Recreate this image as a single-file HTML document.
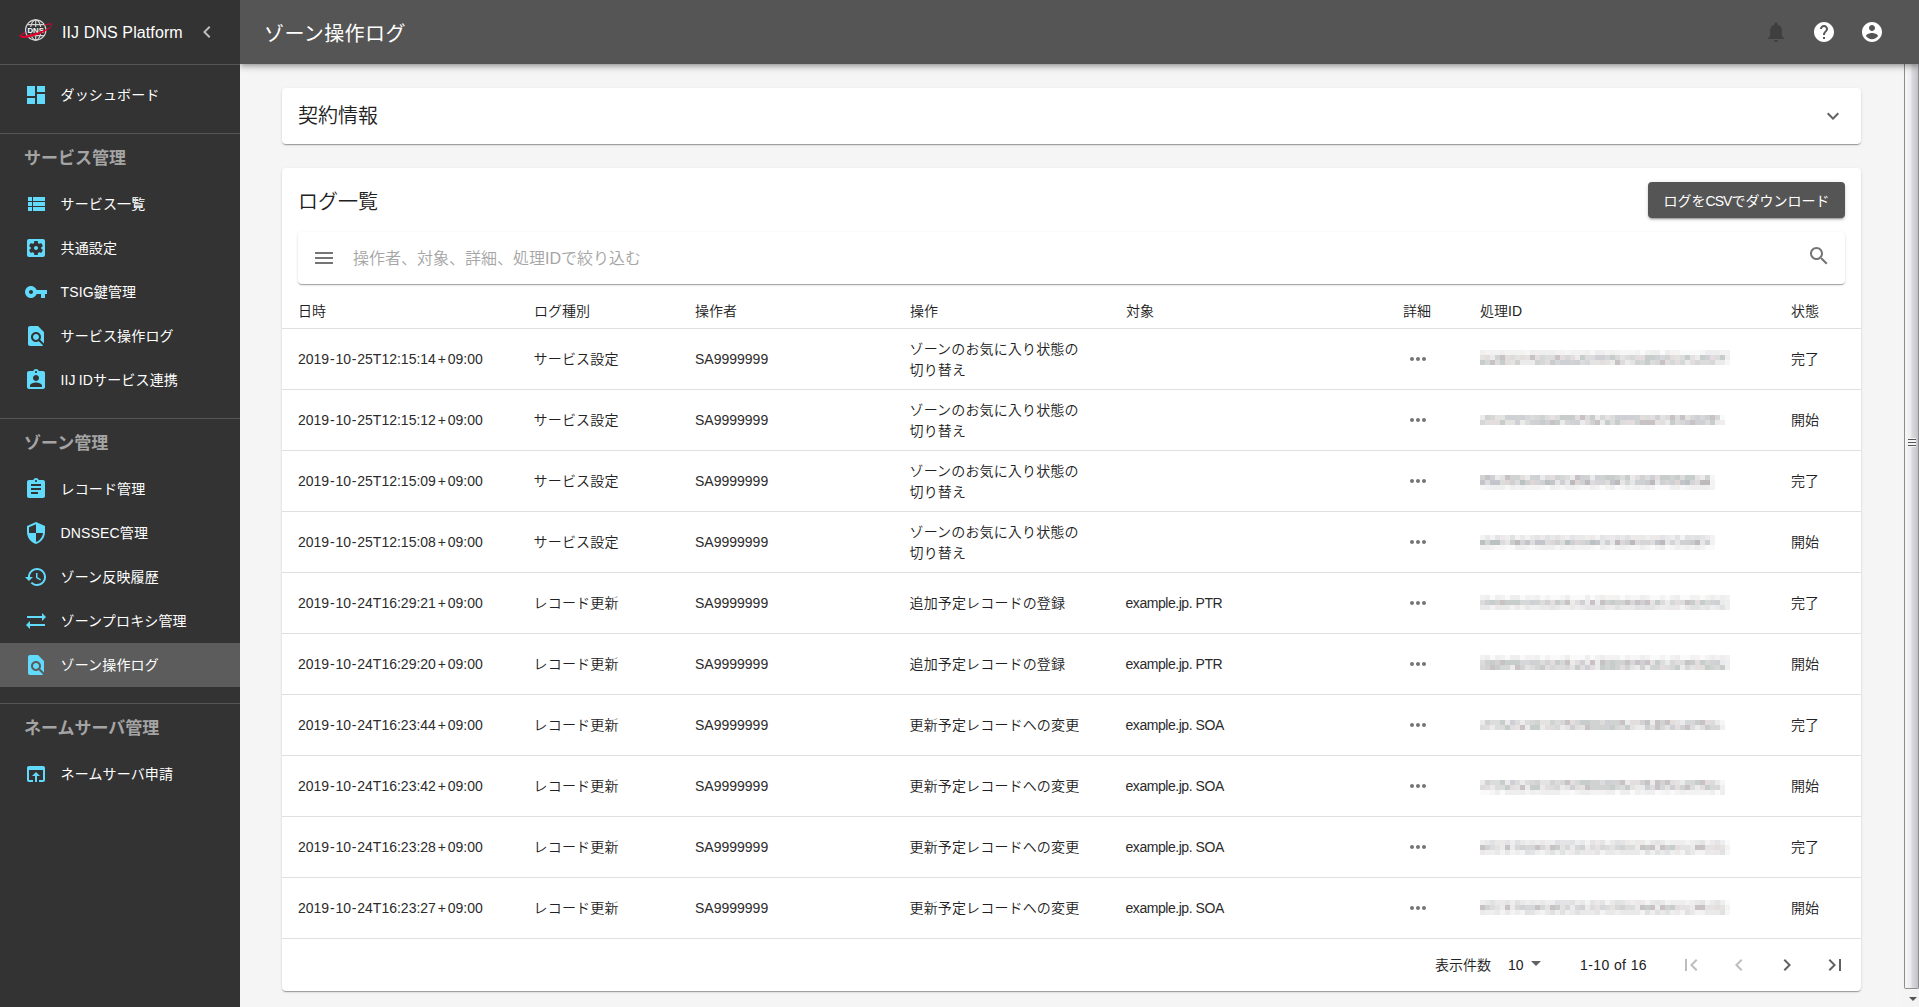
<!DOCTYPE html>
<html lang="ja">
<head>
<meta charset="utf-8">
<title>ゾーン操作ログ</title>
<style>
*{box-sizing:border-box;margin:0;padding:0}
html,body{width:1919px;height:1007px;overflow:hidden;background:#f5f5f5}
body{position:relative;font-family:"Liberation Sans","Noto Sans CJK JP",sans-serif;font-size:14px;color:#212121}
svg{display:block}
/* sidebar */
#side{position:absolute;left:0;top:0;width:240px;height:1007px;background:#333;color:#fff;z-index:3}
#brand{position:absolute;left:0;top:0;width:240px;height:64px}
#brand .logo{position:absolute;left:14px;top:12px}
#brand .name{position:absolute;left:62px;top:23px;font-size:16px;line-height:20px;white-space:nowrap;letter-spacing:.1px}
#brand .chev{position:absolute;left:195px;top:20px}
.sdiv{position:absolute;left:0;width:240px;height:1px;background:#555}
.shead{position:absolute;left:24px;font-size:17px;line-height:24px;font-weight:700;color:#a4a4a4;white-space:nowrap}
.item{position:absolute;left:0;width:240px;height:44px}
.item.active{background:#5c5c5c}
.item svg{position:absolute;left:24px;top:10px;fill:#61dafb}
.item span{position:absolute;left:60.5px;top:11px;font-size:14px;line-height:22px;white-space:nowrap;letter-spacing:.15px}
/* header */
#top{position:absolute;left:240px;top:0;width:1679px;height:64px;background:#555;color:#fff;z-index:2;box-shadow:0 2px 4px -1px rgba(0,0,0,.2),0 4px 5px 0 rgba(0,0,0,.14),0 1px 10px 0 rgba(0,0,0,.12)}
#top .title{position:absolute;left:24px;top:19px;font-size:20px;line-height:30px;white-space:nowrap;letter-spacing:.4px}
#top svg{position:absolute;top:20px}
/* scrollbar */
#sb{position:absolute;left:1902px;top:64px;width:17px;height:943px;background:#f4f4f4}
#sb .thumb{position:absolute;left:2px;top:0;width:15px;height:925px;border:1px solid #8d8d8d;border-top:0;border-radius:0 0 2px 2px;background:linear-gradient(90deg,#f7f7f7 0%,#ececee 42%,#d9d9de 56%,#c2c2c9 100%)}
#sb .grip{position:absolute;left:6px;top:374px;width:8px;height:9px;background:linear-gradient(180deg,#f4f4f4 0,#f4f4f4 1px,#555 1px,#555 2px,#f4f4f4 2px,#f4f4f4 4px,#555 4px,#555 5px,#f4f4f4 5px,#f4f4f4 7px,#555 7px,#555 8px,#f4f4f4 8px)}
#sb .arrow{position:absolute;left:6.500px;top:933px;width:0;height:0;border-left:4px solid transparent;border-right:4px solid transparent;border-top:4px solid #555}
/* cards */
.card{position:absolute;left:282px;width:1579px;background:#fff;border-radius:4px;box-shadow:0 2px 1px -1px rgba(0,0,0,.2),0 1px 1px 0 rgba(0,0,0,.14),0 1px 3px 0 rgba(0,0,0,.12)}
.ctitle{position:absolute;left:16px;font-weight:350;font-size:20px;line-height:30px;white-space:nowrap;color:#212121}
#btn{position:absolute;left:1366px;top:14px;width:197px;height:36px;border-radius:4px;background:#555;color:#fff;font-size:14px;line-height:38px;text-align:center;white-space:nowrap;box-shadow:0 3px 1px -2px rgba(0,0,0,.2),0 2px 2px 0 rgba(0,0,0,.14),0 1px 5px 0 rgba(0,0,0,.12)}
#search{position:absolute;left:16px;top:64px;width:1547px;height:52px;border-radius:4px;background:#fff;box-shadow:0 2px 1px -1px rgba(0,0,0,.2),0 1px 1px 0 rgba(0,0,0,.14),0 1px 3px 0 rgba(0,0,0,.12)}
#search .ph{position:absolute;left:55px;top:15px;font-weight:350;font-size:16px;line-height:24px;color:#a5a5a5;white-space:nowrap}
#search svg{position:absolute;top:14px;fill:#757575}
/* table */
.th{position:absolute;top:132px;font-weight:350;font-size:14px;line-height:22px;white-space:nowrap;color:#212121}
.row{position:absolute;left:0;width:1579px;height:61px;border-top:1px solid #e0e0e0}
.row div{position:absolute;font-weight:350;font-size:14px;line-height:21px;white-space:nowrap;color:#212121}
.row .c1{left:16px;top:20px;letter-spacing:0;color:#2b2b2b}
.c1 i{font-style:normal;padding:0 .8px}
.c1 b{font-weight:400;padding:0 1.8px}
.c2{left:251.5px;top:20px;letter-spacing:.2px}
.row .c3{left:413px;top:20px;color:#2b2b2b}
.c4{left:627.5px;top:20px;letter-spacing:.15px}
.c4.two{top:10px}
.row .c5{left:843.5px;top:20px;letter-spacing:-.45px;color:#2b2b2b}
.c6{left:1124px;top:18px}
.c6 svg{fill:#757575}
.c7{left:1198px}
.c8{left:1509px;top:20px}
#foot{position:absolute;left:0;top:770px;width:1579px;height:52px;border-top:1px solid #e0e0e0;font-weight:350;font-size:14px;color:#212121}
#foot span{position:absolute;top:15px;line-height:22px;white-space:nowrap}
#foot svg{position:absolute;top:14px}
</style>
</head>
<body>

<div id="side">
  <div id="brand">
    <svg class="logo" width="48" height="38" viewBox="14 12 48 38" style="opacity:.999">
      <g fill="none" stroke="#d4d4d4" stroke-width="1.15">
        <circle cx="35.700" cy="30" r="10.200"/>
        <ellipse cx="35.700" cy="30" rx="5.200" ry="10.200"/>
        <path d="M35.700 19.800v20.400M27.300 24.600h16.800M27.300 35.600h16.800"/>
      </g>
      <rect x="28.300" y="27" width="14.800" height="6.600" fill="#333"/>
      <text x="35.700" y="33" text-anchor="middle" font-family="Liberation Sans,sans-serif" font-weight="700" font-size="7.800" fill="#fff">DNS</text>
      <g transform="translate(36 30.600) rotate(-20.700)" fill="#e3002d">
        <path d="M-17.400 -.2C-17.400 2.800 -8 4.500 0 4.500S17.400 2.600 17.400 -.2C16 2.200 8 3 0 2.300C-7 1.700 -13 .8 -17.400 -.2z"/>
        <path d="M17.400 -.2C17.600 -1.600 13.500 -2.400 9.600 -2.800L9.700 -1.900C13 -1.600 15.500 -1.100 16.300 -.2z"/>
        <path d="M-17.400 -.2C-17.600 -1.300 -14 -2 -10.800 -2.500L-10.700 -1.500C-13 -1.200 -15.500 -.8 -16.200 .2z"/>
      </g>
    </svg>
    <div class="name">IIJ DNS Platform</div>
    <svg class="chev" width="24" height="24" viewBox="0 0 24 24" fill="#bdbdbd"><path d="M15.410 7.410L14 6l-6 6 6 6 1.410-1.410L10.830 12z"/></svg>
  </div>
  <div class="sdiv" style="top:64px"></div>

  <div class="item" style="top:73px"><svg width="24" height="24" viewBox="0 0 24 24"><path d="M3 13h8V3H3v10zm0 8h8v-6H3v6zm10 0h8V11h-8v10zm0-18v6h8V3h-8z"/></svg><span>ダッシュボード</span></div>
  <div class="sdiv" style="top:133px"></div>

  <div class="shead" style="top:147px">サービス管理</div>
  <div class="item" style="top:182px"><svg width="24" height="24" viewBox="0 0 24 24"><path d="M4 14h4v-4H4v4zm0 5h4v-4H4v4zM4 9h4V5H4v4zm5 5h12v-4H9v4zm0 5h12v-4H9v4zM9 5v4h12V5H9z"/></svg><span>サービス一覧</span></div>
  <div class="item" style="top:226px"><svg width="24" height="24" viewBox="0 0 24 24"><path d="M12 10c-1.100 0-2 .9-2 2s.9 2 2 2 2-.9 2-2-.9-2-2-2zm7-7H5c-1.110 0-2 .9-2 2v14c0 1.100.89 2 2 2h14c1.110 0 2-.9 2-2V5c0-1.100-.89-2-2-2zm-1.750 9c0 .23-.02.46-.05.68l1.480 1.160c.13.11.17.3.08.45l-1.400 2.420c-.09.15-.27.21-.43.15l-1.740-.7c-.36.28-.76.51-1.180.69l-.26 1.850c-.03.17-.18.3-.35.3h-2.800c-.17 0-.32-.13-.35-.29l-.26-1.850c-.43-.18-.82-.41-1.180-.69l-1.740.7c-.16.06-.34 0-.43-.15l-1.400-2.420c-.09-.15-.05-.34.08-.45l1.480-1.160c-.03-.23-.05-.46-.05-.69 0-.23.02-.46.05-.68l-1.480-1.160c-.13-.11-.17-.3-.08-.45l1.400-2.420c.09-.15.27-.21.43-.15l1.740.7c.36-.28.76-.51 1.180-.69l.26-1.850c.03-.17.18-.3.35-.3h2.800c.17 0 .32.13.35.29l.26 1.850c.43.18.82.41 1.180.69l1.740-.7c.16-.06.34 0 .43.15l1.400 2.420c.09.15.05.34-.08.45l-1.480 1.160c.03.23.05.46.05.69z"/></svg><span>共通設定</span></div>
  <div class="item" style="top:270px"><svg width="24" height="24" viewBox="0 0 24 24"><path d="M12.650 10C11.830 7.670 9.610 6 7 6c-3.310 0-6 2.690-6 6s2.690 6 6 6c2.610 0 4.830-1.670 5.650-4H17v4h4v-4h2v-4H12.650zM7 14c-1.100 0-2-.9-2-2s.9-2 2-2 2 .9 2 2-.9 2-2 2z"/></svg><span>TSIG鍵管理</span></div>
  <div class="item" style="top:314px"><svg width="24" height="24" viewBox="0 0 24 24"><path d="M20 19.590V8l-6-6H6c-1.100 0-1.990.9-1.990 2L4 20c0 1.100.89 2 1.990 2H18c.45 0 .85-.15 1.190-.4l-4.430-4.430c-.8.52-1.740.83-2.760.83-2.760 0-5-2.240-5-5s2.240-5 5-5 5 2.240 5 5c0 1.020-.31 1.960-.83 2.750L20 19.590zM9 13c0 1.660 1.340 3 3 3s3-1.340 3-3-1.340-3-3-3-3 1.340-3 3z"/></svg><span>サービス操作ログ</span></div>
  <div class="item" style="top:358px"><svg width="24" height="24" viewBox="0 0 24 24"><path d="M19 3h-4.180C14.400 1.840 13.300 1 12 1c-1.300 0-2.400.84-2.820 2H5c-1.100 0-2 .9-2 2v14c0 1.100.9 2 2 2h14c1.100 0 2-.9 2-2V5c0-1.100-.9-2-2-2zm-7 0c.55 0 1 .45 1 1s-.45 1-1 1-1-.45-1-1 .45-1 1-1zm0 4c1.660 0 3 1.340 3 3s-1.340 3-3 3-3-1.340-3-3 1.340-3 3-3zm6 12H6v-1.400c0-2 4-3.100 6-3.100s6 1.100 6 3.100V19z"/></svg><span style="word-spacing:-1px">IIJ IDサービス連携</span></div>
  <div class="sdiv" style="top:418px"></div>

  <div class="shead" style="top:432px">ゾーン管理</div>
  <div class="item" style="top:467px"><svg width="24" height="24" viewBox="0 0 24 24"><path d="M19 3h-4.180C14.400 1.840 13.300 1 12 1c-1.300 0-2.400.84-2.820 2H5c-1.100 0-2 .9-2 2v14c0 1.100.9 2 2 2h14c1.100 0 2-.9 2-2V5c0-1.100-.9-2-2-2zm-7 0c.55 0 1 .45 1 1s-.45 1-1 1-1-.45-1-1 .45-1 1-1zm2 14H7v-2h7v2zm3-4H7v-2h10v2zm0-4H7V7h10v2z"/></svg><span>レコード管理</span></div>
  <div class="item" style="top:511px"><svg width="24" height="24" viewBox="0 0 24 24"><path d="M12 1L3 5v6c0 5.550 3.840 10.740 9 12 5.160-1.260 9-6.450 9-12V5l-9-4zm0 10.990h7c-.53 4.120-3.280 7.790-7 8.940V12H5V6.300l7-3.110v8.800z"/></svg><span>DNSSEC管理</span></div>
  <div class="item" style="top:555px"><svg width="24" height="24" viewBox="0 0 24 24"><path d="M13 3c-4.970 0-9 4.030-9 9H1l3.890 3.890.07.14L9 12H6c0-3.870 3.130-7 7-7s7 3.130 7 7-3.130 7-7 7c-1.930 0-3.680-.79-4.940-2.060l-1.420 1.420C8.270 19.990 10.510 21 13 21c4.970 0 9-4.030 9-9s-4.030-9-9-9zm-1 5v5l4.280 2.540.72-1.210-3.500-2.080V8H12z"/></svg><span>ゾーン反映履歴</span></div>
  <div class="item" style="top:599px"><svg width="24" height="24" viewBox="0 0 24 24"><path d="M22 8l-4-4v3H3v2h15v3l4-4zM2 16l4 4v-3h15v-2H6v-3l-4 4z"/></svg><span>ゾーンプロキシ管理</span></div>
  <div class="item active" style="top:643px"><svg width="24" height="24" viewBox="0 0 24 24"><path d="M20 19.590V8l-6-6H6c-1.100 0-1.990.9-1.990 2L4 20c0 1.100.89 2 1.990 2H18c.45 0 .85-.15 1.190-.4l-4.430-4.430c-.8.52-1.740.83-2.760.83-2.760 0-5-2.240-5-5s2.240-5 5-5 5 2.240 5 5c0 1.020-.31 1.960-.83 2.750L20 19.590zM9 13c0 1.660 1.340 3 3 3s3-1.340 3-3-1.340-3-3-3-3 1.340-3 3z"/></svg><span>ゾーン操作ログ</span></div>
  <div class="sdiv" style="top:703px"></div>

  <div class="shead" style="top:717px">ネームサーバ管理</div>
  <div class="item" style="top:752px"><svg width="24" height="24" viewBox="0 0 24 24"><path d="M19 4H5c-1.110 0-2 .9-2 2v12c0 1.100.89 2 2 2h4v-2H5V8h14v10h-4v2h4c1.100 0 2-.9 2-2V6c0-1.100-.89-2-2-2zm-7 6l-4 4h3v6h2v-6h3l-4-4z"/></svg><span>ネームサーバ申請</span></div>
</div>

<div id="top">
  <div class="title">ゾーン操作ログ</div>
  <svg style="left:1524px" width="24" height="24" viewBox="0 0 24 24" fill="#3f3f3f"><path d="M12 22c1.100 0 2-.9 2-2h-4c0 1.100.89 2 2 2zm6-6v-5c0-3.070-1.640-5.640-4.500-6.320V4c0-.83-.67-1.500-1.500-1.500s-1.500.67-1.500 1.500v.68C7.630 5.360 6 7.920 6 11v5l-2 2v1h16v-1l-2-2z"/></svg>
  <svg style="left:1572px" width="24" height="24" viewBox="0 0 24 24" fill="#fff"><path d="M12 2C6.480 2 2 6.480 2 12s4.480 10 10 10 10-4.480 10-10S17.520 2 12 2zm1 17h-2v-2h2v2zm2.070-7.750l-.9.92C13.450 12.900 13 13.500 13 15h-2v-.5c0-1.100.45-2.100 1.170-2.830l1.240-1.260c.37-.36.59-.86.590-1.410 0-1.100-.9-2-2-2s-2 .9-2 2H8c0-2.210 1.790-4 4-4s4 1.790 4 4c0 .88-.36 1.680-.93 2.250z"/></svg>
  <svg style="left:1620px" width="24" height="24" viewBox="0 0 24 24" fill="#fff"><path d="M12 2C6.480 2 2 6.480 2 12s4.480 10 10 10 10-4.480 10-10S17.520 2 12 2zm0 3c1.660 0 3 1.340 3 3s-1.340 3-3 3-3-1.340-3-3 1.340-3 3-3zm0 14.200c-2.500 0-4.710-1.280-6-3.220.03-1.990 4-3.080 6-3.080 1.990 0 5.970 1.090 6 3.080-1.290 1.940-3.500 3.220-6 3.220z"/></svg>
</div>

<div id="sb"><div class="thumb"></div><div class="grip"></div><div class="arrow"></div></div>

<div class="card" style="top:88px;height:56px">
  <div class="ctitle" style="top:13px">契約情報</div>
  <svg style="position:absolute;left:1539px;top:16px" width="24" height="24" viewBox="0 0 24 24" fill="#616161"><path d="M16.590 8.590L12 13.170 7.410 8.590 6 10l6 6 6-6z"/></svg>
</div>

<div class="card" id="log" style="top:168px;height:823px">
  <div class="ctitle" style="top:19px">ログ一覧</div>
  <div id="btn">ログを<span style="letter-spacing:-1px">CSV</span>でダウンロード</div>
  <div id="search">
    <svg style="left:14px" width="24" height="24" viewBox="0 0 24 24"><path d="M3 18h18v-2H3v2zm0-5h18v-2H3v2zm0-7v2h18V6H3z"/></svg>
    <div class="ph">操作者、対象、詳細、処理IDで絞り込む</div>
    <svg style="left:1509px;top:12px" width="24" height="24" viewBox="0 0 24 24"><path d="M15.500 14h-.79l-.28-.27C15.410 12.590 16 11.110 16 9.500 16 5.910 13.090 3 9.500 3S3 5.910 3 9.500 5.910 16 9.500 16c1.610 0 3.090-.59 4.230-1.570l.27.28v.79l5 4.990L20.490 19l-4.990-5zm-6 0C7.010 14 5 11.990 5 9.500S7.010 5 9.500 5 14 7.010 14 9.500 11.990 14 9.500 14z"/></svg>
  </div>

  <div class="th" style="left:16px">日時</div>
  <div class="th" style="left:252px">ログ種別</div>
  <div class="th" style="left:413px">操作者</div>
  <div class="th" style="left:628px">操作</div>
  <div class="th" style="left:844px">対象</div>
  <div class="th" style="left:1121px">詳細</div>
  <div class="th" style="left:1198px">処理ID</div>
  <div class="th" style="left:1509px">状態</div>

  <!--ROWS-START-->
  <div class="row" style="top:160px">
    <div class="c1">2019<i>-</i>10<i>-</i>25T12:15:14<b>+</b>09:00</div><div class="c2">サービス設定</div><div class="c3">SA9999999</div>
    <div class="c4 two">ゾーンのお気に入り状態の<br>切り替え</div><div class="c5"></div>
    <div class="c6"><svg width="24" height="24" viewBox="0 0 24 24"><path d="M6 10c-1.100 0-2 .9-2 2s.9 2 2 2 2-.9 2-2-.9-2-2-2zm12 0c-1.100 0-2 .9-2 2s.9 2 2 2 2-.9 2-2-.9-2-2-2zm-6 0c-1.100 0-2 .9-2 2s.9 2 2 2 2-.9 2-2-.9-2-2-2z"/></svg></div><div class="c7" style="top:21px"><svg width="250" height="15" viewBox="0 0 250 15" shape-rendering="crispEdges"><path fill="#efefef" d="M0 0h5v5h-5zM20 0h5v5h-5zM55 0h5v5h-5zM60 0h5v5h-5zM65 0h5v5h-5zM105 0h5v5h-5zM120 0h5v5h-5zM130 0h5v5h-5zM170 0h5v5h-5zM245 5h5v5h-5z"/><path fill="#f4f3f1" d="M5 0h5v5h-5zM25 0h5v5h-5zM40 0h5v5h-5zM75 0h5v5h-5zM80 0h5v5h-5zM100 0h5v5h-5zM125 0h5v5h-5zM190 0h5v5h-5zM195 0h5v5h-5zM240 0h5v5h-5z"/><path fill="#f2f2f2" d="M10 0h5v5h-5zM15 0h5v5h-5zM30 0h5v5h-5zM35 0h5v5h-5zM90 0h5v5h-5zM95 0h5v5h-5zM135 0h5v5h-5zM155 0h5v5h-5zM165 0h5v5h-5zM245 0h5v5h-5z"/><path fill="#f6f6f6" d="M45 0h5v5h-5zM85 0h5v5h-5zM110 0h5v5h-5zM140 0h5v5h-5zM145 0h5v5h-5zM150 0h5v5h-5zM220 0h5v5h-5zM245 10h5v5h-5z"/><path fill="#eeeeef" d="M50 0h5v5h-5zM70 0h5v5h-5zM115 0h5v5h-5zM175 0h5v5h-5zM185 0h5v5h-5zM225 0h5v5h-5zM230 0h5v5h-5zM235 0h5v5h-5z"/><path fill="#fafafa" d="M160 0h5v5h-5zM180 0h5v5h-5zM200 0h5v5h-5zM205 0h5v5h-5zM210 0h5v5h-5zM215 0h5v5h-5z"/><path fill="#e4e3e2" d="M0 5h5v5h-5zM35 5h5v5h-5zM45 5h5v5h-5zM140 5h5v5h-5zM195 5h5v5h-5zM210 5h5v5h-5zM30 10h5v5h-5zM110 10h5v5h-5zM115 10h5v5h-5zM125 10h5v5h-5zM150 10h5v5h-5z"/><path fill="#e3dedd" d="M5 5h5v5h-5zM25 5h5v5h-5zM40 5h5v5h-5zM55 5h5v5h-5zM80 5h5v5h-5zM90 5h5v5h-5zM155 5h5v5h-5zM160 5h5v5h-5zM190 5h5v5h-5zM230 5h5v5h-5zM25 10h5v5h-5zM65 10h5v5h-5zM120 10h5v5h-5zM185 10h5v5h-5zM195 10h5v5h-5zM210 10h5v5h-5z"/><path fill="#ebebeb" d="M10 5h5v5h-5zM95 5h5v5h-5zM215 5h5v5h-5zM40 10h5v5h-5zM45 10h5v5h-5zM50 10h5v5h-5zM130 10h5v5h-5zM145 10h5v5h-5zM205 10h5v5h-5zM235 10h5v5h-5zM240 10h5v5h-5z"/><path fill="#d0d3d2" d="M15 5h5v5h-5zM185 5h5v5h-5zM35 10h5v5h-5zM55 10h5v5h-5zM90 10h5v5h-5zM155 10h5v5h-5z"/><path fill="#c9c2c4" d="M20 5h5v5h-5zM50 5h5v5h-5zM75 5h5v5h-5zM10 10h5v5h-5zM135 10h5v5h-5zM180 10h5v5h-5z"/><path fill="#dcdcdc" d="M30 5h5v5h-5zM65 5h5v5h-5zM70 5h5v5h-5zM105 5h5v5h-5zM110 5h5v5h-5zM145 5h5v5h-5zM200 5h5v5h-5zM235 5h5v5h-5zM15 10h5v5h-5zM100 10h5v5h-5zM140 10h5v5h-5zM170 10h5v5h-5zM220 10h5v5h-5zM225 10h5v5h-5z"/><path fill="#d6d7d9" d="M60 5h5v5h-5zM85 5h5v5h-5zM125 5h5v5h-5zM135 5h5v5h-5zM150 5h5v5h-5zM180 5h5v5h-5zM5 10h5v5h-5zM60 10h5v5h-5zM75 10h5v5h-5zM105 10h5v5h-5zM160 10h5v5h-5zM175 10h5v5h-5zM190 10h5v5h-5zM200 10h5v5h-5zM215 10h5v5h-5zM230 10h5v5h-5z"/><path fill="#c6cdcb" d="M100 5h5v5h-5zM130 5h5v5h-5zM165 5h5v5h-5zM170 5h5v5h-5zM205 5h5v5h-5zM220 5h5v5h-5zM240 5h5v5h-5zM0 10h5v5h-5zM20 10h5v5h-5zM70 10h5v5h-5zM165 10h5v5h-5z"/><path fill="#cfcfd6" d="M115 5h5v5h-5zM120 5h5v5h-5zM175 5h5v5h-5zM225 5h5v5h-5zM80 10h5v5h-5zM85 10h5v5h-5zM95 10h5v5h-5z"/></svg></div><div class="c8">完了</div>
  </div>
  <div class="row" style="top:221px">
    <div class="c1">2019<i>-</i>10<i>-</i>25T12:15:12<b>+</b>09:00</div><div class="c2">サービス設定</div><div class="c3">SA9999999</div>
    <div class="c4 two">ゾーンのお気に入り状態の<br>切り替え</div><div class="c5"></div>
    <div class="c6"><svg width="24" height="24" viewBox="0 0 24 24"><path d="M6 10c-1.100 0-2 .9-2 2s.9 2 2 2 2-.9 2-2-.9-2-2-2zm12 0c-1.100 0-2 .9-2 2s.9 2 2 2 2-.9 2-2-.9-2-2-2zm-6 0c-1.100 0-2 .9-2 2s.9 2 2 2 2-.9 2-2-.9-2-2-2z"/></svg></div><div class="c7" style="top:25px"><svg width="245" height="10" viewBox="0 0 245 10" shape-rendering="crispEdges"><path fill="#ebebeb" d="M0 0h5v5h-5zM115 0h5v5h-5zM40 5h5v5h-5zM80 5h5v5h-5zM100 5h5v5h-5zM120 5h5v5h-5zM185 5h5v5h-5zM235 5h5v5h-5z"/><path fill="#d0d3d2" d="M5 0h5v5h-5zM35 0h5v5h-5zM60 0h5v5h-5zM155 0h5v5h-5zM50 5h5v5h-5zM90 5h5v5h-5zM110 5h5v5h-5zM155 5h5v5h-5z"/><path fill="#d6d7d9" d="M10 0h5v5h-5zM45 0h5v5h-5zM55 0h5v5h-5zM120 0h5v5h-5zM210 0h5v5h-5zM220 0h5v5h-5zM235 0h5v5h-5zM0 5h5v5h-5zM85 5h5v5h-5zM200 5h5v5h-5z"/><path fill="#e4e3e2" d="M15 0h5v5h-5zM20 0h5v5h-5zM70 0h5v5h-5zM125 0h5v5h-5zM180 0h5v5h-5zM205 0h5v5h-5zM25 5h5v5h-5zM30 5h5v5h-5zM175 5h5v5h-5z"/><path fill="#cfcfd6" d="M25 0h5v5h-5zM30 0h5v5h-5zM40 0h5v5h-5zM135 0h5v5h-5zM140 0h5v5h-5zM145 0h5v5h-5zM150 0h5v5h-5zM175 0h5v5h-5zM215 0h5v5h-5zM225 0h5v5h-5zM35 5h5v5h-5zM55 5h5v5h-5zM65 5h5v5h-5zM95 5h5v5h-5zM205 5h5v5h-5zM215 5h5v5h-5zM220 5h5v5h-5z"/><path fill="#dcdcdc" d="M50 0h5v5h-5zM65 0h5v5h-5zM75 0h5v5h-5zM105 0h5v5h-5zM130 0h5v5h-5zM165 0h5v5h-5zM185 0h5v5h-5zM195 0h5v5h-5zM45 5h5v5h-5zM130 5h5v5h-5zM140 5h5v5h-5zM195 5h5v5h-5zM225 5h5v5h-5z"/><path fill="#c6cdcb" d="M80 0h5v5h-5zM85 0h5v5h-5zM90 0h5v5h-5zM110 0h5v5h-5zM20 5h5v5h-5zM60 5h5v5h-5zM75 5h5v5h-5zM125 5h5v5h-5zM135 5h5v5h-5zM190 5h5v5h-5zM230 5h5v5h-5z"/><path fill="#e3dedd" d="M95 0h5v5h-5zM160 0h5v5h-5zM170 0h5v5h-5zM5 5h5v5h-5zM10 5h5v5h-5zM15 5h5v5h-5zM105 5h5v5h-5zM145 5h5v5h-5zM150 5h5v5h-5zM180 5h5v5h-5z"/><path fill="#c9c2c4" d="M100 0h5v5h-5zM190 0h5v5h-5zM200 0h5v5h-5zM230 0h5v5h-5zM70 5h5v5h-5zM115 5h5v5h-5zM160 5h5v5h-5zM165 5h5v5h-5zM170 5h5v5h-5zM210 5h5v5h-5z"/><path fill="#fafafa" d="M240 0h5v5h-5z"/><path fill="#eeeeef" d="M240 5h5v5h-5z"/></svg></div><div class="c8">開始</div>
  </div>
  <div class="row" style="top:282px">
    <div class="c1">2019<i>-</i>10<i>-</i>25T12:15:09<b>+</b>09:00</div><div class="c2">サービス設定</div><div class="c3">SA9999999</div>
    <div class="c4 two">ゾーンのお気に入り状態の<br>切り替え</div><div class="c5"></div>
    <div class="c6"><svg width="24" height="24" viewBox="0 0 24 24"><path d="M6 10c-1.100 0-2 .9-2 2s.9 2 2 2 2-.9 2-2-.9-2-2-2zm12 0c-1.100 0-2 .9-2 2s.9 2 2 2 2-.9 2-2-.9-2-2-2zm-6 0c-1.100 0-2 .9-2 2s.9 2 2 2 2-.9 2-2-.9-2-2-2z"/></svg></div><div class="c7" style="top:24px"><svg width="235" height="15" viewBox="0 0 235 15" shape-rendering="crispEdges"><path fill="#d0d3d2" d="M0 0h5v5h-5zM30 0h5v5h-5zM35 0h5v5h-5zM50 0h5v5h-5zM75 0h5v5h-5zM105 0h5v5h-5zM120 0h5v5h-5zM135 0h5v5h-5zM160 0h5v5h-5zM190 0h5v5h-5zM225 0h5v5h-5z"/><path fill="#c9c2c4" d="M5 0h5v5h-5zM25 0h5v5h-5zM95 0h5v5h-5z"/><path fill="#cfcfd6" d="M10 0h5v5h-5zM55 0h5v5h-5zM100 0h5v5h-5zM115 0h5v5h-5zM170 0h5v5h-5z"/><path fill="#ebebeb" d="M15 0h5v5h-5zM45 0h5v5h-5zM60 0h5v5h-5zM90 0h5v5h-5zM110 0h5v5h-5zM150 0h5v5h-5zM220 0h5v5h-5z"/><path fill="#e4e3e2" d="M20 0h5v5h-5zM215 0h5v5h-5z"/><path fill="#e3dedd" d="M40 0h5v5h-5zM70 0h5v5h-5zM155 0h5v5h-5zM175 0h5v5h-5z"/><path fill="#dcdcdc" d="M65 0h5v5h-5zM85 0h5v5h-5zM140 0h5v5h-5zM165 0h5v5h-5zM200 0h5v5h-5zM5 5h5v5h-5zM20 5h5v5h-5zM35 5h5v5h-5zM110 5h5v5h-5zM125 5h5v5h-5zM215 5h5v5h-5z"/><path fill="#d6d7d9" d="M80 0h5v5h-5z"/><path fill="#c6cdcb" d="M125 0h5v5h-5zM130 0h5v5h-5zM145 0h5v5h-5zM180 0h5v5h-5zM185 0h5v5h-5zM195 0h5v5h-5zM205 0h5v5h-5zM210 0h5v5h-5z"/><path fill="#f6f6f6" d="M230 0h5v5h-5zM0 10h5v5h-5zM25 10h5v5h-5zM60 10h5v5h-5zM80 10h5v5h-5zM100 10h5v5h-5zM105 10h5v5h-5zM140 10h5v5h-5zM200 10h5v5h-5z"/><path fill="#c3c4cc" d="M0 5h5v5h-5zM10 5h5v5h-5zM15 5h5v5h-5zM70 5h5v5h-5zM130 5h5v5h-5zM200 5h5v5h-5z"/><path fill="#ddd6d4" d="M25 5h5v5h-5zM50 5h5v5h-5zM95 5h5v5h-5zM195 5h5v5h-5z"/><path fill="#cfd0d3" d="M30 5h5v5h-5zM45 5h5v5h-5zM60 5h5v5h-5zM80 5h5v5h-5zM100 5h5v5h-5zM155 5h5v5h-5zM160 5h5v5h-5zM180 5h5v5h-5zM190 5h5v5h-5z"/><path fill="#b9c2c0" d="M40 5h5v5h-5zM65 5h5v5h-5zM205 5h5v5h-5z"/><path fill="#d5d5d7" d="M55 5h5v5h-5zM115 5h5v5h-5zM120 5h5v5h-5zM145 5h5v5h-5zM185 5h5v5h-5zM210 5h5v5h-5z"/><path fill="#e6e6e6" d="M75 5h5v5h-5zM85 5h5v5h-5zM140 5h5v5h-5zM150 5h5v5h-5zM175 5h5v5h-5z"/><path fill="#bdb9bd" d="M90 5h5v5h-5zM105 5h5v5h-5zM135 5h5v5h-5zM170 5h5v5h-5zM220 5h5v5h-5zM225 5h5v5h-5z"/><path fill="#c9cccb" d="M165 5h5v5h-5z"/><path fill="#f4f3f1" d="M230 5h5v5h-5zM45 10h5v5h-5zM55 10h5v5h-5zM115 10h5v5h-5zM125 10h5v5h-5zM160 10h5v5h-5zM230 10h5v5h-5z"/><path fill="#f2f2f2" d="M5 10h5v5h-5zM35 10h5v5h-5zM50 10h5v5h-5zM75 10h5v5h-5zM95 10h5v5h-5zM150 10h5v5h-5zM170 10h5v5h-5zM205 10h5v5h-5z"/><path fill="#efefef" d="M10 10h5v5h-5zM20 10h5v5h-5zM30 10h5v5h-5zM40 10h5v5h-5zM70 10h5v5h-5zM85 10h5v5h-5zM145 10h5v5h-5zM155 10h5v5h-5zM190 10h5v5h-5zM195 10h5v5h-5zM210 10h5v5h-5zM215 10h5v5h-5zM225 10h5v5h-5z"/><path fill="#eeeeef" d="M15 10h5v5h-5zM90 10h5v5h-5zM110 10h5v5h-5zM130 10h5v5h-5zM165 10h5v5h-5zM220 10h5v5h-5z"/><path fill="#fafafa" d="M65 10h5v5h-5zM120 10h5v5h-5zM135 10h5v5h-5zM175 10h5v5h-5zM180 10h5v5h-5zM185 10h5v5h-5z"/></svg></div><div class="c8">完了</div>
  </div>
  <div class="row" style="top:343px">
    <div class="c1">2019<i>-</i>10<i>-</i>25T12:15:08<b>+</b>09:00</div><div class="c2">サービス設定</div><div class="c3">SA9999999</div>
    <div class="c4 two">ゾーンのお気に入り状態の<br>切り替え</div><div class="c5"></div>
    <div class="c6"><svg width="24" height="24" viewBox="0 0 24 24"><path d="M6 10c-1.100 0-2 .9-2 2s.9 2 2 2 2-.9 2-2-.9-2-2-2zm12 0c-1.100 0-2 .9-2 2s.9 2 2 2 2-.9 2-2-.9-2-2-2zm-6 0c-1.100 0-2 .9-2 2s.9 2 2 2 2-.9 2-2-.9-2-2-2z"/></svg></div><div class="c7" style="top:23px"><svg width="235" height="15" viewBox="0 0 235 15" shape-rendering="crispEdges"><path fill="#f3f3f3" d="M0 0h5v5h-5zM10 0h5v5h-5zM35 0h5v5h-5zM45 0h5v5h-5zM115 0h5v5h-5zM200 0h5v5h-5z"/><path fill="#e9e9ea" d="M5 0h5v5h-5zM40 0h5v5h-5zM50 0h5v5h-5zM70 0h5v5h-5zM95 0h5v5h-5zM100 0h5v5h-5zM125 0h5v5h-5zM140 0h5v5h-5zM160 0h5v5h-5zM185 0h5v5h-5z"/><path fill="#e4e4e6" d="M15 0h5v5h-5zM55 0h5v5h-5zM75 0h5v5h-5zM90 0h5v5h-5zM120 0h5v5h-5zM135 0h5v5h-5zM180 0h5v5h-5zM210 0h5v5h-5zM220 0h5v5h-5z"/><path fill="#ece9e8" d="M20 0h5v5h-5zM60 0h5v5h-5zM80 0h5v5h-5zM110 0h5v5h-5zM130 0h5v5h-5zM150 0h5v5h-5zM155 0h5v5h-5zM170 0h5v5h-5zM175 0h5v5h-5zM225 0h5v5h-5z"/><path fill="#eeeeee" d="M25 0h5v5h-5zM85 0h5v5h-5zM105 0h5v5h-5zM165 0h5v5h-5zM190 0h5v5h-5z"/><path fill="#e0e1e3" d="M30 0h5v5h-5zM65 0h5v5h-5zM145 0h5v5h-5zM195 0h5v5h-5zM205 0h5v5h-5zM215 0h5v5h-5z"/><path fill="#f2f2f2" d="M230 0h5v5h-5zM230 5h5v5h-5zM55 10h5v5h-5zM85 10h5v5h-5zM100 10h5v5h-5zM125 10h5v5h-5zM145 10h5v5h-5zM200 10h5v5h-5zM220 10h5v5h-5z"/><path fill="#b9c2c0" d="M0 5h5v5h-5zM10 5h5v5h-5zM15 5h5v5h-5zM85 5h5v5h-5zM110 5h5v5h-5z"/><path fill="#d5d5d7" d="M5 5h5v5h-5zM40 5h5v5h-5zM100 5h5v5h-5zM160 5h5v5h-5zM165 5h5v5h-5zM190 5h5v5h-5z"/><path fill="#dcdcdc" d="M20 5h5v5h-5zM50 5h5v5h-5zM65 5h5v5h-5zM80 5h5v5h-5zM155 5h5v5h-5zM170 5h5v5h-5z"/><path fill="#e6e6e6" d="M25 5h5v5h-5zM120 5h5v5h-5zM130 5h5v5h-5zM185 5h5v5h-5zM195 5h5v5h-5zM220 5h5v5h-5z"/><path fill="#c9cccb" d="M30 5h5v5h-5zM210 5h5v5h-5z"/><path fill="#bdb9bd" d="M35 5h5v5h-5zM135 5h5v5h-5zM150 5h5v5h-5zM180 5h5v5h-5zM215 5h5v5h-5z"/><path fill="#c3c4cc" d="M45 5h5v5h-5zM55 5h5v5h-5zM60 5h5v5h-5zM115 5h5v5h-5zM175 5h5v5h-5z"/><path fill="#ddd6d4" d="M70 5h5v5h-5zM95 5h5v5h-5zM140 5h5v5h-5z"/><path fill="#cfd0d3" d="M75 5h5v5h-5zM90 5h5v5h-5zM105 5h5v5h-5zM125 5h5v5h-5zM145 5h5v5h-5zM200 5h5v5h-5zM205 5h5v5h-5zM225 5h5v5h-5z"/><path fill="#efefef" d="M0 10h5v5h-5zM5 10h5v5h-5zM40 10h5v5h-5zM60 10h5v5h-5zM70 10h5v5h-5zM80 10h5v5h-5zM90 10h5v5h-5zM120 10h5v5h-5zM135 10h5v5h-5zM195 10h5v5h-5zM205 10h5v5h-5z"/><path fill="#f4f3f1" d="M10 10h5v5h-5zM45 10h5v5h-5zM95 10h5v5h-5zM105 10h5v5h-5zM165 10h5v5h-5zM175 10h5v5h-5zM210 10h5v5h-5z"/><path fill="#f6f6f6" d="M15 10h5v5h-5zM20 10h5v5h-5zM50 10h5v5h-5zM75 10h5v5h-5zM110 10h5v5h-5zM130 10h5v5h-5zM150 10h5v5h-5zM155 10h5v5h-5zM190 10h5v5h-5z"/><path fill="#fafafa" d="M25 10h5v5h-5zM30 10h5v5h-5zM115 10h5v5h-5zM170 10h5v5h-5zM185 10h5v5h-5zM225 10h5v5h-5zM230 10h5v5h-5z"/><path fill="#eeeeef" d="M35 10h5v5h-5zM65 10h5v5h-5zM140 10h5v5h-5zM160 10h5v5h-5zM180 10h5v5h-5zM215 10h5v5h-5z"/></svg></div><div class="c8">開始</div>
  </div>
  <div class="row" style="top:404px">
    <div class="c1">2019<i>-</i>10<i>-</i>24T16:29:21<b>+</b>09:00</div><div class="c2">レコード更新</div><div class="c3">SA9999999</div>
    <div class="c4">追加予定レコードの登録</div><div class="c5">example.jp. PTR</div>
    <div class="c6"><svg width="24" height="24" viewBox="0 0 24 24"><path d="M6 10c-1.100 0-2 .9-2 2s.9 2 2 2 2-.9 2-2-.9-2-2-2zm12 0c-1.100 0-2 .9-2 2s.9 2 2 2 2-.9 2-2-.9-2-2-2zm-6 0c-1.100 0-2 .9-2 2s.9 2 2 2 2-.9 2-2-.9-2-2-2z"/></svg></div><div class="c7" style="top:22px"><svg width="250" height="15" viewBox="0 0 250 15" shape-rendering="crispEdges"><path fill="#f2f2f2" d="M0 0h5v5h-5zM20 0h5v5h-5zM45 0h5v5h-5zM115 0h5v5h-5zM135 0h5v5h-5zM145 0h5v5h-5zM165 0h5v5h-5zM190 0h5v5h-5zM210 0h5v5h-5zM245 0h5v5h-5z"/><path fill="#eeeeef" d="M5 0h5v5h-5zM30 0h5v5h-5zM35 0h5v5h-5zM85 0h5v5h-5zM105 0h5v5h-5zM120 0h5v5h-5zM160 0h5v5h-5zM195 0h5v5h-5zM230 0h5v5h-5zM240 0h5v5h-5zM245 5h5v5h-5zM245 10h5v5h-5z"/><path fill="#fafafa" d="M10 0h5v5h-5zM25 0h5v5h-5zM40 0h5v5h-5zM60 0h5v5h-5zM70 0h5v5h-5zM75 0h5v5h-5zM90 0h5v5h-5zM95 0h5v5h-5zM100 0h5v5h-5zM110 0h5v5h-5zM140 0h5v5h-5zM170 0h5v5h-5zM175 0h5v5h-5zM185 0h5v5h-5zM200 0h5v5h-5zM205 0h5v5h-5zM220 0h5v5h-5z"/><path fill="#efefef" d="M15 0h5v5h-5zM55 0h5v5h-5z"/><path fill="#f4f3f1" d="M50 0h5v5h-5zM65 0h5v5h-5zM125 0h5v5h-5zM130 0h5v5h-5zM180 0h5v5h-5zM215 0h5v5h-5zM225 0h5v5h-5zM235 0h5v5h-5z"/><path fill="#f6f6f6" d="M80 0h5v5h-5zM150 0h5v5h-5zM155 0h5v5h-5z"/><path fill="#dcdcdc" d="M0 5h5v5h-5zM60 5h5v5h-5zM180 5h5v5h-5zM200 5h5v5h-5z"/><path fill="#cfcfd6" d="M5 5h5v5h-5zM50 5h5v5h-5zM100 5h5v5h-5zM160 5h5v5h-5zM235 5h5v5h-5z"/><path fill="#c6cdcb" d="M10 5h5v5h-5zM25 5h5v5h-5zM30 5h5v5h-5zM35 5h5v5h-5zM75 5h5v5h-5zM130 5h5v5h-5zM175 5h5v5h-5zM210 5h5v5h-5zM220 5h5v5h-5z"/><path fill="#d0d3d2" d="M15 5h5v5h-5zM55 5h5v5h-5zM65 5h5v5h-5zM125 5h5v5h-5zM135 5h5v5h-5zM140 5h5v5h-5zM230 5h5v5h-5z"/><path fill="#c9c2c4" d="M20 5h5v5h-5zM85 5h5v5h-5zM110 5h5v5h-5zM120 5h5v5h-5zM145 5h5v5h-5zM155 5h5v5h-5zM165 5h5v5h-5zM205 5h5v5h-5z"/><path fill="#d6d7d9" d="M40 5h5v5h-5zM45 5h5v5h-5zM80 5h5v5h-5zM150 5h5v5h-5zM190 5h5v5h-5zM225 5h5v5h-5z"/><path fill="#e3dedd" d="M70 5h5v5h-5zM95 5h5v5h-5zM195 5h5v5h-5zM215 5h5v5h-5z"/><path fill="#ebebeb" d="M90 5h5v5h-5zM105 5h5v5h-5zM115 5h5v5h-5zM185 5h5v5h-5zM240 5h5v5h-5z"/><path fill="#e4e3e2" d="M170 5h5v5h-5z"/><path fill="#e9e9ea" d="M0 10h5v5h-5zM5 10h5v5h-5zM20 10h5v5h-5zM25 10h5v5h-5zM45 10h5v5h-5zM60 10h5v5h-5zM75 10h5v5h-5zM90 10h5v5h-5zM140 10h5v5h-5zM150 10h5v5h-5zM175 10h5v5h-5zM190 10h5v5h-5zM205 10h5v5h-5zM220 10h5v5h-5zM235 10h5v5h-5z"/><path fill="#f3f3f3" d="M10 10h5v5h-5zM30 10h5v5h-5zM40 10h5v5h-5zM200 10h5v5h-5z"/><path fill="#ece9e8" d="M15 10h5v5h-5zM35 10h5v5h-5zM65 10h5v5h-5zM100 10h5v5h-5zM125 10h5v5h-5zM130 10h5v5h-5zM145 10h5v5h-5zM185 10h5v5h-5zM195 10h5v5h-5z"/><path fill="#eeeeee" d="M50 10h5v5h-5zM55 10h5v5h-5zM80 10h5v5h-5zM85 10h5v5h-5zM95 10h5v5h-5zM180 10h5v5h-5zM230 10h5v5h-5z"/><path fill="#e4e4e6" d="M70 10h5v5h-5zM105 10h5v5h-5zM110 10h5v5h-5zM115 10h5v5h-5zM160 10h5v5h-5zM225 10h5v5h-5z"/><path fill="#e0e1e3" d="M120 10h5v5h-5zM135 10h5v5h-5zM155 10h5v5h-5zM165 10h5v5h-5zM170 10h5v5h-5zM210 10h5v5h-5zM215 10h5v5h-5zM240 10h5v5h-5z"/></svg></div><div class="c8">完了</div>
  </div>
  <div class="row" style="top:465px">
    <div class="c1">2019<i>-</i>10<i>-</i>24T16:29:20<b>+</b>09:00</div><div class="c2">レコード更新</div><div class="c3">SA9999999</div>
    <div class="c4">追加予定レコードの登録</div><div class="c5">example.jp. PTR</div>
    <div class="c6"><svg width="24" height="24" viewBox="0 0 24 24"><path d="M6 10c-1.100 0-2 .9-2 2s.9 2 2 2 2-.9 2-2-.9-2-2-2zm12 0c-1.100 0-2 .9-2 2s.9 2 2 2 2-.9 2-2-.9-2-2-2zm-6 0c-1.100 0-2 .9-2 2s.9 2 2 2 2-.9 2-2-.9-2-2-2z"/></svg></div><div class="c7" style="top:21px"><svg width="250" height="15" viewBox="0 0 250 15" shape-rendering="crispEdges"><path fill="#f2f2f2" d="M0 0h5v5h-5zM20 0h5v5h-5zM45 0h5v5h-5zM115 0h5v5h-5zM135 0h5v5h-5zM145 0h5v5h-5zM165 0h5v5h-5zM190 0h5v5h-5zM210 0h5v5h-5zM245 0h5v5h-5z"/><path fill="#eeeeef" d="M5 0h5v5h-5zM30 0h5v5h-5zM35 0h5v5h-5zM85 0h5v5h-5zM105 0h5v5h-5zM120 0h5v5h-5zM160 0h5v5h-5zM195 0h5v5h-5zM230 0h5v5h-5zM240 0h5v5h-5zM245 5h5v5h-5zM245 10h5v5h-5z"/><path fill="#fafafa" d="M10 0h5v5h-5zM25 0h5v5h-5zM40 0h5v5h-5zM60 0h5v5h-5zM70 0h5v5h-5zM75 0h5v5h-5zM90 0h5v5h-5zM95 0h5v5h-5zM100 0h5v5h-5zM110 0h5v5h-5zM140 0h5v5h-5zM170 0h5v5h-5zM175 0h5v5h-5zM185 0h5v5h-5zM200 0h5v5h-5zM205 0h5v5h-5zM220 0h5v5h-5z"/><path fill="#efefef" d="M15 0h5v5h-5zM55 0h5v5h-5z"/><path fill="#f4f3f1" d="M50 0h5v5h-5zM65 0h5v5h-5zM125 0h5v5h-5zM130 0h5v5h-5zM180 0h5v5h-5zM215 0h5v5h-5zM225 0h5v5h-5zM235 0h5v5h-5z"/><path fill="#f6f6f6" d="M80 0h5v5h-5zM150 0h5v5h-5zM155 0h5v5h-5z"/><path fill="#dcdcdc" d="M0 5h5v5h-5zM60 5h5v5h-5zM180 5h5v5h-5zM200 5h5v5h-5zM50 10h5v5h-5zM75 10h5v5h-5zM80 10h5v5h-5zM185 10h5v5h-5z"/><path fill="#cfcfd6" d="M5 5h5v5h-5zM50 5h5v5h-5zM100 5h5v5h-5zM160 5h5v5h-5zM235 5h5v5h-5zM105 10h5v5h-5z"/><path fill="#c6cdcb" d="M10 5h5v5h-5zM25 5h5v5h-5zM30 5h5v5h-5zM35 5h5v5h-5zM75 5h5v5h-5zM130 5h5v5h-5zM175 5h5v5h-5zM210 5h5v5h-5zM220 5h5v5h-5zM15 10h5v5h-5zM60 10h5v5h-5zM95 10h5v5h-5zM120 10h5v5h-5zM130 10h5v5h-5zM195 10h5v5h-5zM225 10h5v5h-5zM240 10h5v5h-5z"/><path fill="#d0d3d2" d="M15 5h5v5h-5zM55 5h5v5h-5zM65 5h5v5h-5zM125 5h5v5h-5zM135 5h5v5h-5zM140 5h5v5h-5zM230 5h5v5h-5zM5 10h5v5h-5zM40 10h5v5h-5zM55 10h5v5h-5zM125 10h5v5h-5zM135 10h5v5h-5zM145 10h5v5h-5zM160 10h5v5h-5zM170 10h5v5h-5zM175 10h5v5h-5zM230 10h5v5h-5z"/><path fill="#c9c2c4" d="M20 5h5v5h-5zM85 5h5v5h-5zM110 5h5v5h-5zM120 5h5v5h-5zM145 5h5v5h-5zM155 5h5v5h-5zM165 5h5v5h-5zM205 5h5v5h-5zM10 10h5v5h-5zM35 10h5v5h-5z"/><path fill="#d6d7d9" d="M40 5h5v5h-5zM45 5h5v5h-5zM80 5h5v5h-5zM150 5h5v5h-5zM190 5h5v5h-5zM225 5h5v5h-5zM0 10h5v5h-5zM20 10h5v5h-5zM25 10h5v5h-5zM70 10h5v5h-5zM85 10h5v5h-5zM190 10h5v5h-5zM205 10h5v5h-5zM235 10h5v5h-5z"/><path fill="#e3dedd" d="M70 5h5v5h-5zM95 5h5v5h-5zM195 5h5v5h-5zM215 5h5v5h-5zM65 10h5v5h-5zM100 10h5v5h-5zM110 10h5v5h-5zM140 10h5v5h-5zM180 10h5v5h-5zM215 10h5v5h-5zM220 10h5v5h-5z"/><path fill="#ebebeb" d="M90 5h5v5h-5zM105 5h5v5h-5zM115 5h5v5h-5zM185 5h5v5h-5zM240 5h5v5h-5zM30 10h5v5h-5zM115 10h5v5h-5zM155 10h5v5h-5zM165 10h5v5h-5zM200 10h5v5h-5z"/><path fill="#e4e3e2" d="M170 5h5v5h-5zM45 10h5v5h-5zM90 10h5v5h-5zM150 10h5v5h-5zM210 10h5v5h-5z"/></svg></div><div class="c8">開始</div>
  </div>
  <div class="row" style="top:526px">
    <div class="c1">2019<i>-</i>10<i>-</i>24T16:23:44<b>+</b>09:00</div><div class="c2">レコード更新</div><div class="c3">SA9999999</div>
    <div class="c4">更新予定レコードへの変更</div><div class="c5">example.jp. SOA</div>
    <div class="c6"><svg width="24" height="24" viewBox="0 0 24 24"><path d="M6 10c-1.100 0-2 .9-2 2s.9 2 2 2 2-.9 2-2-.9-2-2-2zm12 0c-1.100 0-2 .9-2 2s.9 2 2 2 2-.9 2-2-.9-2-2-2zm-6 0c-1.100 0-2 .9-2 2s.9 2 2 2 2-.9 2-2-.9-2-2-2z"/></svg></div><div class="c7" style="top:25px"><svg width="245" height="10" viewBox="0 0 245 10" shape-rendering="crispEdges"><path fill="#ebebeb" d="M0 0h5v5h-5zM25 0h5v5h-5zM40 0h5v5h-5zM145 0h5v5h-5zM170 0h5v5h-5zM200 0h5v5h-5zM235 0h5v5h-5zM10 5h5v5h-5zM45 5h5v5h-5zM60 5h5v5h-5zM80 5h5v5h-5zM155 5h5v5h-5zM160 5h5v5h-5zM215 5h5v5h-5z"/><path fill="#d0d3d2" d="M5 0h5v5h-5zM55 0h5v5h-5zM70 0h5v5h-5zM110 0h5v5h-5zM115 0h5v5h-5zM130 0h5v5h-5zM135 0h5v5h-5zM160 0h5v5h-5zM180 0h5v5h-5zM110 5h5v5h-5zM115 5h5v5h-5zM120 5h5v5h-5zM125 5h5v5h-5zM200 5h5v5h-5z"/><path fill="#dcdcdc" d="M10 0h5v5h-5zM15 0h5v5h-5zM35 0h5v5h-5zM45 0h5v5h-5zM75 0h5v5h-5zM120 0h5v5h-5zM230 0h5v5h-5zM0 5h5v5h-5zM15 5h5v5h-5zM20 5h5v5h-5zM70 5h5v5h-5zM140 5h5v5h-5zM170 5h5v5h-5zM210 5h5v5h-5z"/><path fill="#c6cdcb" d="M20 0h5v5h-5zM100 0h5v5h-5zM105 0h5v5h-5zM215 0h5v5h-5zM25 5h5v5h-5zM50 5h5v5h-5zM55 5h5v5h-5zM130 5h5v5h-5zM145 5h5v5h-5zM225 5h5v5h-5z"/><path fill="#cfcfd6" d="M30 0h5v5h-5zM125 0h5v5h-5zM90 5h5v5h-5zM165 5h5v5h-5zM190 5h5v5h-5z"/><path fill="#d6d7d9" d="M50 0h5v5h-5zM80 0h5v5h-5zM95 0h5v5h-5zM205 0h5v5h-5zM210 0h5v5h-5zM75 5h5v5h-5zM135 5h5v5h-5zM180 5h5v5h-5zM230 5h5v5h-5zM235 5h5v5h-5z"/><path fill="#e4e3e2" d="M60 0h5v5h-5zM65 0h5v5h-5zM195 0h5v5h-5zM35 5h5v5h-5zM85 5h5v5h-5zM100 5h5v5h-5zM150 5h5v5h-5zM185 5h5v5h-5z"/><path fill="#c9c2c4" d="M85 0h5v5h-5zM140 0h5v5h-5zM165 0h5v5h-5zM175 0h5v5h-5zM185 0h5v5h-5zM220 0h5v5h-5zM40 5h5v5h-5zM105 5h5v5h-5zM175 5h5v5h-5zM205 5h5v5h-5z"/><path fill="#e3dedd" d="M90 0h5v5h-5zM150 0h5v5h-5zM155 0h5v5h-5zM190 0h5v5h-5zM225 0h5v5h-5zM5 5h5v5h-5zM30 5h5v5h-5zM65 5h5v5h-5zM95 5h5v5h-5zM195 5h5v5h-5zM220 5h5v5h-5z"/><path fill="#f6f6f6" d="M240 0h5v5h-5z"/><path fill="#efefef" d="M240 5h5v5h-5z"/></svg></div><div class="c8">完了</div>
  </div>
  <div class="row" style="top:587px">
    <div class="c1">2019<i>-</i>10<i>-</i>24T16:23:42<b>+</b>09:00</div><div class="c2">レコード更新</div><div class="c3">SA9999999</div>
    <div class="c4">更新予定レコードへの変更</div><div class="c5">example.jp. SOA</div>
    <div class="c6"><svg width="24" height="24" viewBox="0 0 24 24"><path d="M6 10c-1.100 0-2 .9-2 2s.9 2 2 2 2-.9 2-2-.9-2-2-2zm12 0c-1.100 0-2 .9-2 2s.9 2 2 2 2-.9 2-2-.9-2-2-2zm-6 0c-1.100 0-2 .9-2 2s.9 2 2 2 2-.9 2-2-.9-2-2-2z"/></svg></div><div class="c7" style="top:24px"><svg width="245" height="15" viewBox="0 0 245 15" shape-rendering="crispEdges"><path fill="#ebebeb" d="M0 0h5v5h-5zM25 0h5v5h-5zM40 0h5v5h-5zM145 0h5v5h-5zM170 0h5v5h-5zM200 0h5v5h-5zM235 0h5v5h-5zM10 5h5v5h-5zM45 5h5v5h-5zM60 5h5v5h-5zM80 5h5v5h-5zM155 5h5v5h-5zM160 5h5v5h-5zM215 5h5v5h-5z"/><path fill="#d0d3d2" d="M5 0h5v5h-5zM55 0h5v5h-5zM70 0h5v5h-5zM110 0h5v5h-5zM115 0h5v5h-5zM130 0h5v5h-5zM135 0h5v5h-5zM160 0h5v5h-5zM180 0h5v5h-5zM110 5h5v5h-5zM115 5h5v5h-5zM120 5h5v5h-5zM125 5h5v5h-5zM200 5h5v5h-5z"/><path fill="#dcdcdc" d="M10 0h5v5h-5zM15 0h5v5h-5zM35 0h5v5h-5zM45 0h5v5h-5zM75 0h5v5h-5zM120 0h5v5h-5zM230 0h5v5h-5zM0 5h5v5h-5zM15 5h5v5h-5zM20 5h5v5h-5zM70 5h5v5h-5zM140 5h5v5h-5zM170 5h5v5h-5zM210 5h5v5h-5z"/><path fill="#c6cdcb" d="M20 0h5v5h-5zM100 0h5v5h-5zM105 0h5v5h-5zM215 0h5v5h-5zM25 5h5v5h-5zM50 5h5v5h-5zM55 5h5v5h-5zM130 5h5v5h-5zM145 5h5v5h-5zM225 5h5v5h-5z"/><path fill="#cfcfd6" d="M30 0h5v5h-5zM125 0h5v5h-5zM90 5h5v5h-5zM165 5h5v5h-5zM190 5h5v5h-5z"/><path fill="#d6d7d9" d="M50 0h5v5h-5zM80 0h5v5h-5zM95 0h5v5h-5zM205 0h5v5h-5zM210 0h5v5h-5zM75 5h5v5h-5zM135 5h5v5h-5zM180 5h5v5h-5zM230 5h5v5h-5zM235 5h5v5h-5z"/><path fill="#e4e3e2" d="M60 0h5v5h-5zM65 0h5v5h-5zM195 0h5v5h-5zM35 5h5v5h-5zM85 5h5v5h-5zM100 5h5v5h-5zM150 5h5v5h-5zM185 5h5v5h-5z"/><path fill="#c9c2c4" d="M85 0h5v5h-5zM140 0h5v5h-5zM165 0h5v5h-5zM175 0h5v5h-5zM185 0h5v5h-5zM220 0h5v5h-5zM40 5h5v5h-5zM105 5h5v5h-5zM175 5h5v5h-5zM205 5h5v5h-5z"/><path fill="#e3dedd" d="M90 0h5v5h-5zM150 0h5v5h-5zM155 0h5v5h-5zM190 0h5v5h-5zM225 0h5v5h-5zM5 5h5v5h-5zM30 5h5v5h-5zM65 5h5v5h-5zM95 5h5v5h-5zM195 5h5v5h-5zM220 5h5v5h-5z"/><path fill="#f6f6f6" d="M240 0h5v5h-5zM10 10h5v5h-5zM80 10h5v5h-5zM85 10h5v5h-5zM180 10h5v5h-5z"/><path fill="#efefef" d="M240 5h5v5h-5zM50 10h5v5h-5zM60 10h5v5h-5zM125 10h5v5h-5zM130 10h5v5h-5zM155 10h5v5h-5zM165 10h5v5h-5zM170 10h5v5h-5zM200 10h5v5h-5z"/><path fill="#fafafa" d="M0 10h5v5h-5zM5 10h5v5h-5zM20 10h5v5h-5zM90 10h5v5h-5zM135 10h5v5h-5zM150 10h5v5h-5zM175 10h5v5h-5zM190 10h5v5h-5zM235 10h5v5h-5z"/><path fill="#eeeeef" d="M15 10h5v5h-5zM25 10h5v5h-5zM30 10h5v5h-5zM35 10h5v5h-5zM40 10h5v5h-5zM65 10h5v5h-5zM70 10h5v5h-5zM75 10h5v5h-5zM100 10h5v5h-5zM105 10h5v5h-5zM140 10h5v5h-5zM145 10h5v5h-5zM230 10h5v5h-5zM240 10h5v5h-5z"/><path fill="#f4f3f1" d="M45 10h5v5h-5zM95 10h5v5h-5zM115 10h5v5h-5zM120 10h5v5h-5zM160 10h5v5h-5zM185 10h5v5h-5zM195 10h5v5h-5zM205 10h5v5h-5zM220 10h5v5h-5zM225 10h5v5h-5z"/><path fill="#f2f2f2" d="M55 10h5v5h-5zM110 10h5v5h-5zM210 10h5v5h-5zM215 10h5v5h-5z"/></svg></div><div class="c8">開始</div>
  </div>
  <div class="row" style="top:648px">
    <div class="c1">2019<i>-</i>10<i>-</i>24T16:23:28<b>+</b>09:00</div><div class="c2">レコード更新</div><div class="c3">SA9999999</div>
    <div class="c4">更新予定レコードへの変更</div><div class="c5">example.jp. SOA</div>
    <div class="c6"><svg width="24" height="24" viewBox="0 0 24 24"><path d="M6 10c-1.100 0-2 .9-2 2s.9 2 2 2 2-.9 2-2-.9-2-2-2zm12 0c-1.100 0-2 .9-2 2s.9 2 2 2 2-.9 2-2-.9-2-2-2zm-6 0c-1.100 0-2 .9-2 2s.9 2 2 2 2-.9 2-2-.9-2-2-2z"/></svg></div><div class="c7" style="top:23px"><svg width="250" height="15" viewBox="0 0 250 15" shape-rendering="crispEdges"><path fill="#eeeeee" d="M0 0h5v5h-5zM30 0h5v5h-5zM45 0h5v5h-5zM55 0h5v5h-5zM65 0h5v5h-5zM70 0h5v5h-5zM95 0h5v5h-5zM150 0h5v5h-5zM190 0h5v5h-5zM195 0h5v5h-5zM200 0h5v5h-5zM210 0h5v5h-5zM240 0h5v5h-5zM5 10h5v5h-5zM10 10h5v5h-5zM35 10h5v5h-5zM55 10h5v5h-5zM75 10h5v5h-5zM85 10h5v5h-5zM135 10h5v5h-5zM170 10h5v5h-5zM190 10h5v5h-5z"/><path fill="#e9e9ea" d="M5 0h5v5h-5zM15 0h5v5h-5zM40 0h5v5h-5zM50 0h5v5h-5zM60 0h5v5h-5zM100 0h5v5h-5zM130 0h5v5h-5zM170 0h5v5h-5zM180 0h5v5h-5zM215 0h5v5h-5zM15 10h5v5h-5zM25 10h5v5h-5zM65 10h5v5h-5zM100 10h5v5h-5zM105 10h5v5h-5zM125 10h5v5h-5zM130 10h5v5h-5zM140 10h5v5h-5zM145 10h5v5h-5zM150 10h5v5h-5zM155 10h5v5h-5zM180 10h5v5h-5zM210 10h5v5h-5zM225 10h5v5h-5zM235 10h5v5h-5z"/><path fill="#e0e1e3" d="M10 0h5v5h-5zM35 0h5v5h-5zM75 0h5v5h-5zM90 0h5v5h-5zM135 0h5v5h-5zM45 10h5v5h-5zM70 10h5v5h-5zM80 10h5v5h-5zM95 10h5v5h-5zM165 10h5v5h-5zM175 10h5v5h-5zM185 10h5v5h-5zM205 10h5v5h-5zM240 10h5v5h-5z"/><path fill="#ece9e8" d="M20 0h5v5h-5zM115 0h5v5h-5zM145 0h5v5h-5zM155 0h5v5h-5zM160 0h5v5h-5zM230 0h5v5h-5zM0 10h5v5h-5zM90 10h5v5h-5zM110 10h5v5h-5zM195 10h5v5h-5zM230 10h5v5h-5z"/><path fill="#e4e4e6" d="M25 0h5v5h-5zM80 0h5v5h-5zM85 0h5v5h-5zM110 0h5v5h-5zM120 0h5v5h-5zM140 0h5v5h-5zM175 0h5v5h-5zM220 0h5v5h-5zM235 0h5v5h-5zM50 10h5v5h-5zM115 10h5v5h-5z"/><path fill="#f3f3f3" d="M105 0h5v5h-5zM125 0h5v5h-5zM165 0h5v5h-5zM185 0h5v5h-5zM205 0h5v5h-5zM225 0h5v5h-5zM20 10h5v5h-5zM30 10h5v5h-5zM40 10h5v5h-5zM60 10h5v5h-5zM120 10h5v5h-5zM160 10h5v5h-5zM200 10h5v5h-5zM215 10h5v5h-5zM220 10h5v5h-5z"/><path fill="#fafafa" d="M245 0h5v5h-5z"/><path fill="#c9c2c4" d="M0 5h5v5h-5zM25 5h5v5h-5zM55 5h5v5h-5zM70 5h5v5h-5zM160 5h5v5h-5zM170 5h5v5h-5zM180 5h5v5h-5zM215 5h5v5h-5zM220 5h5v5h-5z"/><path fill="#d0d3d2" d="M5 5h5v5h-5zM40 5h5v5h-5zM100 5h5v5h-5zM140 5h5v5h-5zM185 5h5v5h-5z"/><path fill="#dcdcdc" d="M10 5h5v5h-5zM110 5h5v5h-5zM125 5h5v5h-5zM145 5h5v5h-5zM150 5h5v5h-5z"/><path fill="#e4e3e2" d="M15 5h5v5h-5zM65 5h5v5h-5zM80 5h5v5h-5zM115 5h5v5h-5zM130 5h5v5h-5zM200 5h5v5h-5zM205 5h5v5h-5zM225 5h5v5h-5zM230 5h5v5h-5zM240 5h5v5h-5z"/><path fill="#ebebeb" d="M20 5h5v5h-5zM30 5h5v5h-5zM90 5h5v5h-5zM105 5h5v5h-5zM155 5h5v5h-5zM175 5h5v5h-5zM210 5h5v5h-5z"/><path fill="#d6d7d9" d="M35 5h5v5h-5zM45 5h5v5h-5zM50 5h5v5h-5zM60 5h5v5h-5zM85 5h5v5h-5zM95 5h5v5h-5zM120 5h5v5h-5zM135 5h5v5h-5z"/><path fill="#c6cdcb" d="M75 5h5v5h-5zM165 5h5v5h-5zM190 5h5v5h-5z"/><path fill="#e3dedd" d="M195 5h5v5h-5zM235 5h5v5h-5z"/><path fill="#f4f3f1" d="M245 5h5v5h-5z"/><path fill="#f6f6f6" d="M245 10h5v5h-5z"/></svg></div><div class="c8">完了</div>
  </div>
  <div class="row" style="top:709px">
    <div class="c1">2019<i>-</i>10<i>-</i>24T16:23:27<b>+</b>09:00</div><div class="c2">レコード更新</div><div class="c3">SA9999999</div>
    <div class="c4">更新予定レコードへの変更</div><div class="c5">example.jp. SOA</div>
    <div class="c6"><svg width="24" height="24" viewBox="0 0 24 24"><path d="M6 10c-1.100 0-2 .9-2 2s.9 2 2 2 2-.9 2-2-.9-2-2-2zm12 0c-1.100 0-2 .9-2 2s.9 2 2 2 2-.9 2-2-.9-2-2-2zm-6 0c-1.100 0-2 .9-2 2s.9 2 2 2 2-.9 2-2-.9-2-2-2z"/></svg></div><div class="c7" style="top:22px"><svg width="250" height="15" viewBox="0 0 250 15" shape-rendering="crispEdges"><path fill="#eeeeee" d="M0 0h5v5h-5zM30 0h5v5h-5zM45 0h5v5h-5zM55 0h5v5h-5zM65 0h5v5h-5zM70 0h5v5h-5zM95 0h5v5h-5zM150 0h5v5h-5zM190 0h5v5h-5zM195 0h5v5h-5zM200 0h5v5h-5zM210 0h5v5h-5zM240 0h5v5h-5zM5 10h5v5h-5zM10 10h5v5h-5zM35 10h5v5h-5zM55 10h5v5h-5zM75 10h5v5h-5zM85 10h5v5h-5zM135 10h5v5h-5zM170 10h5v5h-5zM190 10h5v5h-5z"/><path fill="#e9e9ea" d="M5 0h5v5h-5zM15 0h5v5h-5zM40 0h5v5h-5zM50 0h5v5h-5zM60 0h5v5h-5zM100 0h5v5h-5zM130 0h5v5h-5zM170 0h5v5h-5zM180 0h5v5h-5zM215 0h5v5h-5zM15 10h5v5h-5zM25 10h5v5h-5zM65 10h5v5h-5zM100 10h5v5h-5zM105 10h5v5h-5zM125 10h5v5h-5zM130 10h5v5h-5zM140 10h5v5h-5zM145 10h5v5h-5zM150 10h5v5h-5zM155 10h5v5h-5zM180 10h5v5h-5zM210 10h5v5h-5zM225 10h5v5h-5zM235 10h5v5h-5z"/><path fill="#e0e1e3" d="M10 0h5v5h-5zM35 0h5v5h-5zM75 0h5v5h-5zM90 0h5v5h-5zM135 0h5v5h-5zM45 10h5v5h-5zM70 10h5v5h-5zM80 10h5v5h-5zM95 10h5v5h-5zM165 10h5v5h-5zM175 10h5v5h-5zM185 10h5v5h-5zM205 10h5v5h-5zM240 10h5v5h-5z"/><path fill="#ece9e8" d="M20 0h5v5h-5zM115 0h5v5h-5zM145 0h5v5h-5zM155 0h5v5h-5zM160 0h5v5h-5zM230 0h5v5h-5zM0 10h5v5h-5zM90 10h5v5h-5zM110 10h5v5h-5zM195 10h5v5h-5zM230 10h5v5h-5z"/><path fill="#e4e4e6" d="M25 0h5v5h-5zM80 0h5v5h-5zM85 0h5v5h-5zM110 0h5v5h-5zM120 0h5v5h-5zM140 0h5v5h-5zM175 0h5v5h-5zM220 0h5v5h-5zM235 0h5v5h-5zM50 10h5v5h-5zM115 10h5v5h-5z"/><path fill="#f3f3f3" d="M105 0h5v5h-5zM125 0h5v5h-5zM165 0h5v5h-5zM185 0h5v5h-5zM205 0h5v5h-5zM225 0h5v5h-5zM20 10h5v5h-5zM30 10h5v5h-5zM40 10h5v5h-5zM60 10h5v5h-5zM120 10h5v5h-5zM160 10h5v5h-5zM200 10h5v5h-5zM215 10h5v5h-5zM220 10h5v5h-5z"/><path fill="#fafafa" d="M245 0h5v5h-5z"/><path fill="#c9c2c4" d="M0 5h5v5h-5zM25 5h5v5h-5zM55 5h5v5h-5zM70 5h5v5h-5zM160 5h5v5h-5zM170 5h5v5h-5zM180 5h5v5h-5zM215 5h5v5h-5zM220 5h5v5h-5z"/><path fill="#d0d3d2" d="M5 5h5v5h-5zM40 5h5v5h-5zM100 5h5v5h-5zM140 5h5v5h-5zM185 5h5v5h-5z"/><path fill="#dcdcdc" d="M10 5h5v5h-5zM110 5h5v5h-5zM125 5h5v5h-5zM145 5h5v5h-5zM150 5h5v5h-5z"/><path fill="#e4e3e2" d="M15 5h5v5h-5zM65 5h5v5h-5zM80 5h5v5h-5zM115 5h5v5h-5zM130 5h5v5h-5zM200 5h5v5h-5zM205 5h5v5h-5zM225 5h5v5h-5zM230 5h5v5h-5zM240 5h5v5h-5z"/><path fill="#ebebeb" d="M20 5h5v5h-5zM30 5h5v5h-5zM90 5h5v5h-5zM105 5h5v5h-5zM155 5h5v5h-5zM175 5h5v5h-5zM210 5h5v5h-5z"/><path fill="#d6d7d9" d="M35 5h5v5h-5zM45 5h5v5h-5zM50 5h5v5h-5zM60 5h5v5h-5zM85 5h5v5h-5zM95 5h5v5h-5zM120 5h5v5h-5zM135 5h5v5h-5z"/><path fill="#c6cdcb" d="M75 5h5v5h-5zM165 5h5v5h-5zM190 5h5v5h-5z"/><path fill="#e3dedd" d="M195 5h5v5h-5zM235 5h5v5h-5z"/><path fill="#f4f3f1" d="M245 5h5v5h-5z"/><path fill="#f6f6f6" d="M245 10h5v5h-5z"/></svg></div><div class="c8">開始</div>
  </div>
  <!--ROWS-END-->

  <div id="foot">
    <span style="left:1153px">表示件数</span>
    <span style="left:1226px">10</span>
    <svg style="left:1242px;top:12px" width="24" height="24" viewBox="0 0 24 24" fill="#616161"><path d="M7 10l5 5 5-5z"/></svg>
    <span style="left:1298px;letter-spacing:.4px">1-10 of 16</span>
    <svg style="left:1397px" width="24" height="24" viewBox="0 0 24 24" fill="#bdbdbd"><path d="M18.410 16.590L13.820 12l4.590-4.590L17 6l-6 6 6 6zM6 6h2v12H6z"/></svg>
    <svg style="left:1445px" width="24" height="24" viewBox="0 0 24 24" fill="#bdbdbd"><path d="M15.410 7.410L14 6l-6 6 6 6 1.410-1.410L10.830 12z"/></svg>
    <svg style="left:1493px" width="24" height="24" viewBox="0 0 24 24" fill="#616161"><path d="M10 6L8.590 7.410 13.170 12l-4.580 4.590L10 18l6-6z"/></svg>
    <svg style="left:1541px" width="24" height="24" viewBox="0 0 24 24" fill="#616161"><path d="M5.590 7.410L10.180 12l-4.590 4.590L7 18l6-6-6-6zM16 6h2v12h-2z"/></svg>
  </div>
</div>

</body>
</html>
